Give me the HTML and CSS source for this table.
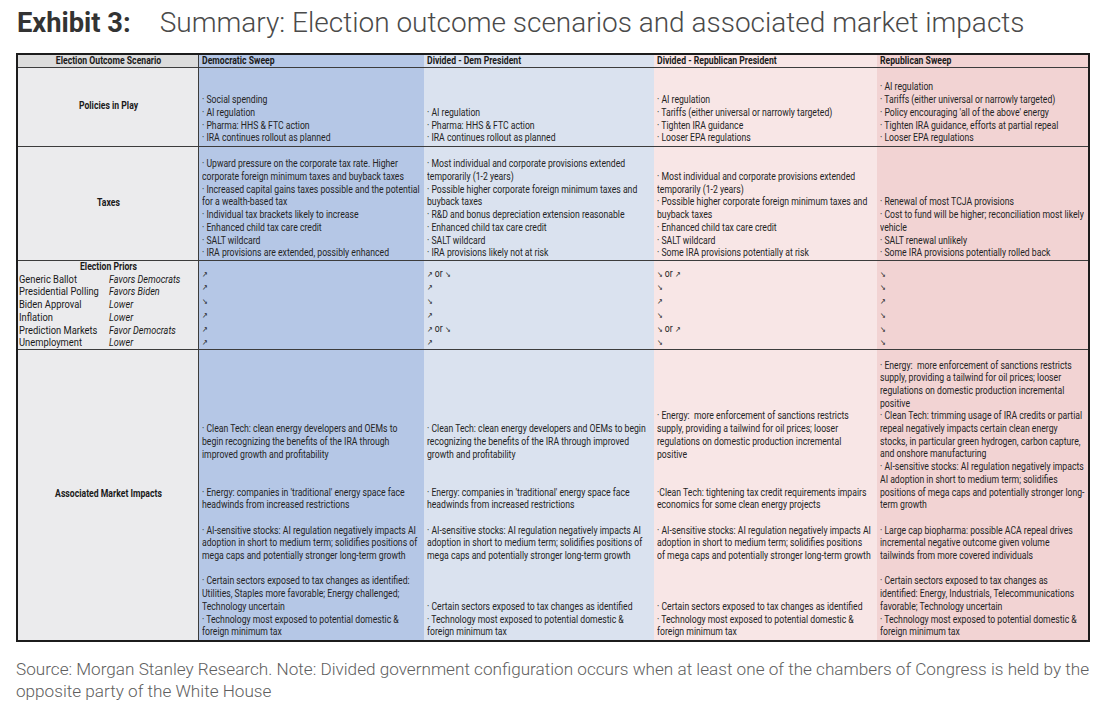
FILE: index.html
```html
<!DOCTYPE html>
<html>
<head>
<meta charset="utf-8">
<link rel="stylesheet" href="styles.css">
</head>
<body>
<div class="page">
  <h1 class="title"><span class="ex">Exhibit 3:</span><span class="sum">Summary: Election outcome scenarios and associated market impacts</span></h1>

  <div class="tbl">
    <!-- header -->
    <div class="c lab hd"><div class="in">Election Outcome Scenario</div></div>
    <div class="c dem hd"><div class="in">Democratic Sweep</div></div>
    <div class="c ddem hd"><div class="in">Divided - Dem President</div></div>
    <div class="c drep hd"><div class="in">Divided - Republican President</div></div>
    <div class="c rep hd"><div class="in">Republican Sweep</div></div>

    <!-- policies -->
    <div class="c lab mid pol"><div class="in"><b>Policies in Play</b></div></div>
    <div class="c dem pol"><div class="in">
      <div>· Social spending</div>
      <div>· AI regulation</div>
      <div>· Pharma: HHS &amp; FTC action</div>
      <div>· IRA continues rollout as planned</div>
    </div></div>
    <div class="c ddem pol"><div class="in">
      <div>· AI regulation</div>
      <div>· Pharma: HHS &amp; FTC action</div>
      <div>· IRA continues rollout as planned</div>
    </div></div>
    <div class="c drep pol"><div class="in">
      <div>· AI regulation</div>
      <div>· Tariffs (either universal or narrowly targeted)</div>
      <div>· Tighten IRA guidance</div>
      <div>· Looser EPA regulations</div>
    </div></div>
    <div class="c rep pol"><div class="in">
      <div>· AI regulation</div>
      <div>· Tariffs (either universal or narrowly targeted)</div>
      <div>· Policy encouraging 'all of the above' energy</div>
      <div>· Tighten IRA guidance, efforts at partial repeal</div>
      <div>· Looser EPA regulations</div>
    </div></div>

    <!-- taxes -->
    <div class="c lab mid"><div class="in"><b>Taxes</b></div></div>
    <div class="c dem"><div class="in">
      <div>· Upward pressure on the corporate tax rate. Higher</div>
      <div>corporate foreign minimum taxes and buyback taxes</div>
      <div>· Increased capital gains taxes possible and the potential</div>
      <div>for a wealth-based tax</div>
      <div>· Individual tax brackets likely to increase</div>
      <div>· Enhanced child tax care credit</div>
      <div>· SALT wildcard</div>
      <div>· IRA provisions are extended, possibly enhanced</div>
    </div></div>
    <div class="c ddem"><div class="in">
      <div>· Most individual and corporate provisions extended</div>
      <div>temporarily (1-2 years)</div>
      <div>· Possible higher corporate foreign minimum taxes and</div>
      <div>buyback taxes</div>
      <div>· R&amp;D and bonus depreciation extension reasonable</div>
      <div>· Enhanced child tax care credit</div>
      <div>· SALT wildcard</div>
      <div>· IRA provisions likely not at risk</div>
    </div></div>
    <div class="c drep"><div class="in">
      <div>· Most individual and corporate provisions extended</div>
      <div>temporarily (1-2 years)</div>
      <div>· Possible higher corporate foreign minimum taxes and</div>
      <div>buyback taxes</div>
      <div>· Enhanced child tax care credit</div>
      <div>· SALT wildcard</div>
      <div>· Some IRA provisions potentially at risk</div>
    </div></div>
    <div class="c rep"><div class="in">
      <div>· Renewal of most TCJA provisions</div>
      <div>· Cost to fund will be higher; reconciliation most likely</div>
      <div>vehicle</div>
      <div>· SALT renewal unlikely</div>
      <div>· Some IRA provisions potentially rolled back</div>
    </div></div>

    <!-- election priors -->
    <div class="c lab pri"><div class="in">
      <div class="prihd">Election Priors</div>
      <div class="prigrid">
        <span>Generic Ballot</span><i>Favors Democrats</i>
        <span>Presidential Polling</span><i>Favors Biden</i>
        <span>Biden Approval</span><i>Lower</i>
        <span>Inflation</span><i>Lower</i>
        <span>Prediction Markets</span><i>Favor Democrats</i>
        <span>Unemployment</span><i>Lower</i>
      </div>
    </div></div>
    <div class="c dem pri"><div class="in">
      <div><span class="ar">↗</span></div>
      <div><span class="ar">↗</span></div>
      <div><span class="ar">↘</span></div>
      <div><span class="ar">↗</span></div>
      <div><span class="ar">↗</span></div>
      <div><span class="ar">↗</span></div>
    </div></div>
    <div class="c ddem pri"><div class="in">
      <div><span class="ar">↗</span> or <span class="ar">↘</span></div>
      <div><span class="ar">↗</span></div>
      <div><span class="ar">↘</span></div>
      <div><span class="ar">↗</span></div>
      <div><span class="ar">↗</span> or <span class="ar">↘</span></div>
      <div><span class="ar">↗</span></div>
    </div></div>
    <div class="c drep pri"><div class="in">
      <div><span class="ar">↘</span> or <span class="ar">↗</span></div>
      <div><span class="ar">↘</span></div>
      <div><span class="ar">↗</span></div>
      <div><span class="ar">↘</span></div>
      <div><span class="ar">↘</span> or <span class="ar">↗</span></div>
      <div><span class="ar">↘</span></div>
    </div></div>
    <div class="c rep pri"><div class="in">
      <div><span class="ar">↘</span></div>
      <div><span class="ar">↘</span></div>
      <div><span class="ar">↗</span></div>
      <div><span class="ar">↘</span></div>
      <div><span class="ar">↘</span></div>
      <div><span class="ar">↘</span></div>
    </div></div>

    <!-- market impacts -->
    <div class="c lab mid last"><div class="in"><b>Associated Market Impacts</b></div></div>
    <div class="c dem last"><div class="in">
      <div>· Clean Tech: clean energy developers and OEMs to</div>
      <div>begin recognizing the benefits of the IRA through</div>
      <div>improved growth and profitability</div>
      <div class="bl"></div><div class="bl"></div>
      <div>· Energy: companies in 'traditional' energy space face</div>
      <div>headwinds from increased restrictions</div>
      <div class="bl"></div>
      <div>· AI-sensitive stocks: AI regulation negatively impacts AI</div>
      <div>adoption in short to medium term; solidifies positions of</div>
      <div>mega caps and potentially stronger long-term growth</div>
      <div class="bl"></div>
      <div>· Certain sectors exposed to tax changes as identified:</div>
      <div>Utilities, Staples more favorable; Energy challenged;</div>
      <div>Technology uncertain</div>
      <div>· Technology most exposed to potential domestic &amp;</div>
      <div>foreign minimum tax</div>
    </div></div>
    <div class="c ddem last"><div class="in">
      <div>· Clean Tech: clean energy developers and OEMs to begin</div>
      <div>recognizing the benefits of the IRA through improved</div>
      <div>growth and profitability</div>
      <div class="bl"></div><div class="bl"></div>
      <div>· Energy: companies in 'traditional' energy space face</div>
      <div>headwinds from increased restrictions</div>
      <div class="bl"></div>
      <div>· AI-sensitive stocks: AI regulation negatively impacts AI</div>
      <div>adoption in short to medium term; solidifies positions of</div>
      <div>mega caps and potentially stronger long-term growth</div>
      <div class="bl"></div><div class="bl"></div><div class="bl"></div>
      <div>· Certain sectors exposed to tax changes as identified</div>
      <div>· Technology most exposed to potential domestic &amp;</div>
      <div>foreign minimum tax</div>
    </div></div>
    <div class="c drep last"><div class="in">
      <div>· Energy:&nbsp; more enforcement of sanctions restricts</div>
      <div>supply, providing a tailwind for oil prices; looser</div>
      <div>regulations on domestic production incremental</div>
      <div>positive</div>
      <div class="bl"></div><div class="bl"></div>
      <div>·Clean Tech: tightening tax credit requirements impairs</div>
      <div>economics for some clean energy projects</div>
      <div class="bl"></div>
      <div>· AI-sensitive stocks: AI regulation negatively impacts AI</div>
      <div>adoption in short to medium term; solidifies positions</div>
      <div>of mega caps and potentially stronger long-term growth</div>
      <div class="bl"></div><div class="bl"></div><div class="bl"></div>
      <div>· Certain sectors exposed to tax changes as identified</div>
      <div>· Technology most exposed to potential domestic &amp;</div>
      <div>foreign minimum tax</div>
    </div></div>
    <div class="c rep last"><div class="in">
      <div>· Energy:&nbsp; more enforcement of sanctions restricts</div>
      <div>supply, providing a tailwind for oil prices; looser</div>
      <div>regulations on domestic production incremental</div>
      <div>positive</div>
      <div>· Clean Tech: trimming usage of IRA credits or partial</div>
      <div>repeal negatively impacts certain clean energy</div>
      <div>stocks, in particular green hydrogen, carbon capture,</div>
      <div>and onshore manufacturing</div>
      <div>· AI-sensitive stocks: AI regulation negatively impacts</div>
      <div>AI adoption in short to medium term; solidifies</div>
      <div>positions of mega caps and potentially stronger long-</div>
      <div>term growth</div>
      <div class="bl"></div>
      <div>· Large cap biopharma: possible ACA repeal drives</div>
      <div>incremental negative outcome given volume</div>
      <div>tailwinds from more covered individuals</div>
      <div class="bl"></div>
      <div>· Certain sectors exposed to tax changes as</div>
      <div>identified: Energy, Industrials, Telecommunications</div>
      <div>favorable; Technology uncertain</div>
      <div>· Technology most exposed to potential domestic &amp;</div>
      <div>foreign minimum tax</div>
    </div></div>
  </div>

  <p class="source">Source: Morgan Stanley Research. Note: Divided government configuration occurs when at least one of the chambers of Congress is held by the<br>opposite party of the White House</p>
</div>
</body>
</html>
```

FILE: styles.css
```css
html, body {
  margin: 0;
  padding: 0;
  background: #ffffff;
}

.page {
  width: 1100px;
  height: 705px;
  overflow: hidden;
}

.title {
  margin: 0;
  height: 53px;
  box-sizing: border-box;
  padding: 9px 0 0 17px;
  font-family: Roboto, "Liberation Sans", sans-serif;
  font-size: 28px;
  line-height: 28px;
  white-space: nowrap;
  display: flex;
  align-items: baseline;
  gap: 29px;
}

.ex {
  font-weight: 700;
  font-size: 27.3px;
  color: #333333;
}

.sum {
  font-weight: 300;
  color: #4a4a4a;
}

.tbl {
  margin-left: 16px;
  width: 1074px;
  box-sizing: border-box;
  border: 2px solid #1c1c1c;
  display: grid;
  grid-template-columns: 181px 225px 230px 223px 211px;
  grid-template-rows: 13px 79px 114px 89px 290px;
  font-family: Roboto, "Liberation Sans", sans-serif;
  font-size: 10.2px;
  line-height: 12.7px;
  color: #242424;
}

.c {
  box-sizing: border-box;
  border-bottom: 1px solid #3c3c3c;
  display: flex;
  flex-direction: column;
  justify-content: flex-end;
  padding: 0 0 0 3px;
  overflow: hidden;
  white-space: nowrap;
}

.in {
  width: calc(100% / 0.85);
  transform: scaleX(0.85);
  transform-origin: 0 0;
}

.c.last {
  border-bottom: none;
  padding-bottom: 1px;
}

.c.pol {
  padding-bottom: 1px;
}

.bl {
  height: 12.7px;
}

.lab {
  background: #ebebed;
  border-right: 1px solid #3c3c3c;
  padding-left: 1px;
  color: #1a1a1a;
}

.dem { background: #b5c7e6; }
.ddem { background: #dae2ef; }
.drep { background: #f8e6e6; }
.rep { background: #f2d3d3; }

.hd {
  font-weight: 700;
  justify-content: center;
  line-height: 12px;
  padding-bottom: 0;
  color: #1a1a1a;
}

.lab.hd {
  background: #dcdcdc;
}

.mid {
  justify-content: center;
}

.lab .in {
  text-align: center;
}

.c.pri {
  padding-bottom: 0;
}

.pri .in {
  margin-bottom: -1px;
}

.prihd {
  font-weight: 700;
  text-align: center;
}

.prigrid {
  display: grid;
  grid-template-columns: 106px 1fr;
  text-align: left;
}

.prigrid span {
  font-size: 11px;
}

.prigrid i {
  font-style: italic;
  font-size: 10.7px;
}

.ar {
  font-family: "DejaVu Sans", sans-serif;
  font-size: 8px;
}

.source {
  margin: 16px 0 0 16px;
  font-family: Roboto, "Liberation Sans", sans-serif;
  font-weight: 300;
  font-size: 17.15px;
  line-height: 22px;
  color: #5e5e5e;
  white-space: nowrap;
}
```
